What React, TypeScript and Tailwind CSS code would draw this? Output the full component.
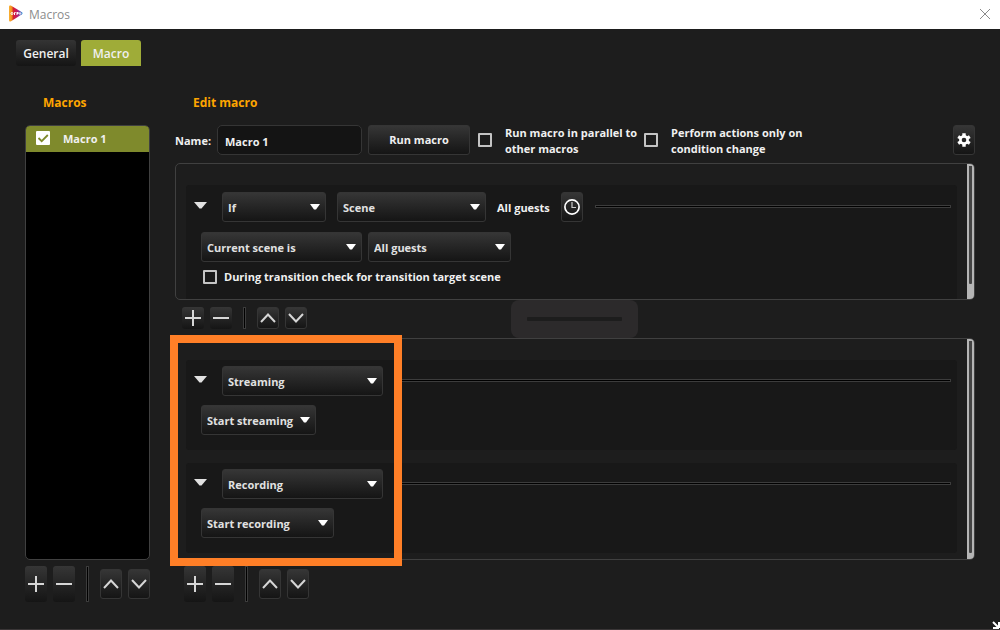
import { useState, type ReactNode } from "react";
import clsx from "clsx";

const buttonFace =
  "bg-linear-to-b from-[#363636] to-[#151515] border border-[#353535] rounded-[3px]";

function Dropdown({
  label,
  options,
  className,
}: {
  label: string;
  options: string[];
  className: string;
}) {
  return (
    <div className={clsx("relative h-[30px] shrink-0", className)}>
      <select
        aria-label={label}
        className={clsx(
          buttonFace,
          "block w-full h-full appearance-none pt-0.5 pl-[5px] pr-4 text-[#e1e1e1] outline-none",
        )}
      >
        {options.map((option) => (
          <option key={option}>{option}</option>
        ))}
      </select>
      <svg
        className="absolute right-1.5 top-3 pointer-events-none"
        width="10"
        height="6"
        viewBox="0 0 10 6"
      >
        <path d="M0 0h10L6 5.500h-2z" fill="#fff" />
      </svg>
    </div>
  );
}

function CheckBox({ id, className }: { id: string; className?: string }) {
  return (
    <input
      id={id}
      type="checkbox"
      className={clsx(
        "appearance-none size-3.5 shrink-0 rounded-[1px] border-2 border-[#c4c4c4] checked:bg-[#c4c4c4]",
        className,
      )}
    />
  );
}

function ToolButton({
  label,
  tall,
  flat,
  children,
}: {
  label: string;
  tall: boolean;
  flat?: boolean;
  children: ReactNode;
}) {
  return (
    <button
      aria-label={label}
      className={clsx(
        "w-[22px] shrink-0 flex items-center justify-center rounded-[3px] bg-linear-to-b from-[#363636] to-[#151515]",
        flat ? "" : "border border-[#353535]",
        !tall && "h-[22px]",
        tall && flat && "h-9",
        tall && !flat && "h-[30px]",
      )}
    >
      <svg
        width="16"
        height="16"
        viewBox="0 0 16 16"
        fill="none"
        stroke="#d6d6d6"
        strokeWidth="2"
        className="shrink-0"
      >
        {children}
      </svg>
    </button>
  );
}

function Toolbar({ tall = false }: { tall?: boolean }) {
  return (
    <div className="flex items-center gap-1.5">
      <ToolButton label="Add" tall={tall} flat>
        <path d="M0 8h16M8 0v16" />
      </ToolButton>
      <ToolButton label="Remove" tall={tall} flat>
        <path d="M0 8h16" />
      </ToolButton>
      <div
        className={clsx(
          "w-[3px] ml-[5px] mr-[5px] bg-black border border-[#3c3c3c]",
          tall ? "h-9" : "h-[22px]",
        )}
      />
      <ToolButton label="Move up" tall={tall}>
        <path d="M1 12l7-7.500 7 7.500" />
      </ToolButton>
      <ToolButton label="Move down" tall={tall}>
        <path d="M1 4l7 7.500 7-7.500" />
      </ToolButton>
    </div>
  );
}

function Rule() {
  return <div className="flex-1 h-[3px] mb-0.5 bg-black border border-[#3c3c3c]" />;
}

function Collapse() {
  return (
    <button aria-label="Collapse" className="mr-[15px] mb-1 shrink-0">
      <svg width="13" height="7" viewBox="0 0 13 7" className="block">
        <path d="M0 0h13L7.500 6.500h-2z" fill="#e1e1e1" />
      </svg>
    </button>
  );
}

function ScrollPanel({
  children,
  className,
  trackClass,
}: {
  children: ReactNode;
  className?: string;
  trackClass: string;
}) {
  return (
    <div className={clsx("flex border border-[#404040] rounded-[5px]", className)}>
      <div className="flex-1 flex flex-col pl-2.5 pr-2.5 pt-[21px]">{children}</div>
      <div
        className={clsx(
          "w-[7px] flex bg-[#b5b5b5] rounded-r-[4px] pl-0.5 pr-0.5 pt-0.5",
          trackClass,
        )}
      >
        <div className="flex-1 bg-[#444] rounded-b-[1px]" />
      </div>
    </div>
  );
}

function Action({
  type,
  command,
  commandClass,
}: {
  type: string;
  command: string;
  commandClass: string;
}) {
  return (
    <div className="bg-[#181818] rounded-[3px] h-[90px] pt-1.5 pl-2 pr-1.5">
      <div className="flex items-center">
        <Collapse />
        <Dropdown label="Action type" options={[type]} className="w-[161px] mr-3" />
        <Rule />
      </div>
      <div className="mt-[9px] ml-[7px]">
        <Dropdown label={`${type} action`} options={[command]} className={commandClass} />
      </div>
    </div>
  );
}

function AppLogo() {
  return (
    <svg width="14" height="17" viewBox="0 0 14 17" className="mb-0.5">
      <defs>
        <linearGradient id="logo" x1="0" x2="1">
          <stop offset="0" stopColor="#f9b233" />
          <stop offset="0.22" stopColor="#f08a1c" />
          <stop offset="0.3" stopColor="#d8232a" />
          <stop offset="0.6" stopColor="#c0186b" />
          <stop offset="0.82" stopColor="#6a4fb0" />
          <stop offset="1" stopColor="#35a8e0" />
        </linearGradient>
      </defs>
      <path d="M0 1.500Q0 0 1.800.6L13 7.200q1.200 1 0 2L2 16.200Q0 17 0 15.200z" fill="url(#logo)" />
      <g fill="none" stroke="#fff" strokeWidth="1">
        <circle cx="3" cy="8.500" r="1" />
        <path d="M5.500 10V7.500h1.200M8 7v3M9.500 7.500h-1.500M8 8.500h1.500" />
        <circle cx="11" cy="8.500" r=".8" />
      </g>
    </svg>
  );
}

export default function App() {
  const [name, setName] = useState("Macro 1");
  const [selected, setSelected] = useState(true);

  return (
    <div className="min-h-screen flex flex-col bg-[#1d1d1d] border-b border-[#3a3637] font-['Open_Sans','Noto_Sans',sans-serif] text-[11px] leading-4 font-bold text-[#f0f0f0]">
      <header className="h-[29px] shrink-0 flex items-center bg-white pl-[9px] pr-[9px] text-[12px] font-normal text-[#8c8c8c]">
        <AppLogo />
        <h1 className="ml-1.5 flex-1">Macros</h1>
        <button aria-label="Close" className="mb-0.5">
          <svg width="12" height="12" viewBox="0 0 12 12" stroke="#8a8a8a">
            <path d="M1 1l10 10M11 1L1 11" />
          </svg>
        </button>
      </header>

      <nav className="flex gap-[5px] pt-[11px] pl-4 text-[12px] font-semibold">
        <button className="w-[60px] h-[26px] pt-0.5 rounded-[3px] bg-linear-to-b from-[#343434] to-[#151515]">
          General
        </button>
        <button className="w-[60px] h-[26px] pt-0.5 rounded-t-[3px] bg-[#9fac38]">Macro</button>
      </nav>

      <main className="flex-1 flex gap-[25px] px-[25px] pt-7 pb-[27px]">
        <section className="w-[125px] shrink-0 flex flex-col">
          <h2 className="pt-px pl-[18px] text-[12px] text-[#fea500]">Macros</h2>
          <div className="mt-3.5 mb-1.5 flex-1 bg-black border border-[#404040] rounded-[5px] overflow-hidden">
            <label className="flex items-center h-[26px] pl-2.5 bg-[#7f8a2c]">
              <span className="relative size-3.5 mb-0.5 mr-[13px]">
                <input
                  type="checkbox"
                  checked={selected}
                  onChange={() => setSelected(!selected)}
                  className="block appearance-none size-3.5 rounded-[1px] bg-white"
                />
                {selected && (
                  <svg
                    className="absolute inset-0 pointer-events-none"
                    viewBox="0 0 14 14"
                    fill="none"
                    stroke="#7f8a2c"
                    strokeWidth="1.800"
                  >
                    <path d="M2.500 7l3.200 3.200L11.800 4" />
                  </svg>
                )}
              </span>
              Macro 1
            </label>
          </div>
          <Toolbar tall />
        </section>

        <section className="flex-1 flex flex-col">
          <h2 className="pt-px pl-[18px] text-[12px] text-[#fea500]">Edit macro</h2>

          <div className="flex items-center mt-3.5 mb-2 h-[30px]">
            <label htmlFor="name" className="w-[42px] pt-0.5">
              Name:
            </label>
            <input
              id="name"
              value={name}
              onChange={(e) => setName(e.target.value)}
              className="w-[145px] h-[30px] pt-0.5 px-[7px] mr-1.5 bg-[#141414] border border-[#353535] rounded-[5px] outline-none"
            />
            <button className={clsx(buttonFace, "w-[102px] h-[30px] mr-2 shrink-0")}>
              Run macro
            </button>
            <CheckBox id="parallel" />
            <label htmlFor="parallel" className="ml-[13px] pt-0.5 w-[139px]">
              Run macro in parallel to
              <br />
              other macros
            </label>
            <CheckBox id="on-change" />
            <label htmlFor="on-change" className="ml-[13px] pt-0.5">
              Perform actions only on
              <br />
              condition change
            </label>
            <button
              aria-label="Macro settings"
              className={clsx(
                buttonFace,
                "w-[22px] h-[30px] ml-auto shrink-0 flex items-center justify-center",
              )}
            >
              <svg width="14" height="14" viewBox="0 0 14 14" className="shrink-0">
                <g stroke="#fff" strokeWidth="3.400">
                  <path d="M7 .3v13.400M1.200 3.600l11.600 6.800M12.800 3.600L1.200 10.400" />
                </g>
                <circle cx="7" cy="7" r="4.900" fill="#fff" />
                <circle cx="7" cy="7" r="2.300" fill="#262626" />
              </svg>
            </button>
          </div>

          <ScrollPanel trackClass="pb-[15px]">
            <div className="bg-[#181818] rounded-t-[3px] pt-[7px] pb-3.5 pl-2 pr-1.5">
              <div className="flex items-center">
                <Collapse />
                <Dropdown label="Logic" options={["If"]} className="w-[104px] mr-[11px]" />
                <Dropdown label="Condition type" options={["Scene"]} className="w-[149px] mr-[11px]" />
                <span className="mr-[11px] pt-0.5">All guests</span>
                <button
                  aria-label="Duration"
                  className={clsx(
                    buttonFace,
                    "w-[22px] h-[30px] mr-3 shrink-0 flex items-center justify-center",
                  )}
                >
                  <svg
                    width="16"
                    height="16"
                    viewBox="0 0 16 16"
                    fill="none"
                    stroke="#fff"
                    className="shrink-0"
                  >
                    <circle cx="8" cy="8" r="7.100" strokeWidth="1.700" />
                    <path d="M8 3v5.500h4" stroke="#ccc" strokeWidth="1.200" />
                  </svg>
                </button>
                <Rule />
              </div>
              <div className="flex gap-1.5 mt-2.5 ml-[7px]">
                <Dropdown label="Scene check" options={["Current scene is"]} className="w-[161px]" />
                <Dropdown label="Scene" options={["All guests"]} className="w-[143px]" />
              </div>
              <div className="flex items-center mt-[7px] ml-[9px]">
                <CheckBox id="transition" />
                <label htmlFor="transition" className="ml-[7px]">
                  During transition check for transition target scene
                </label>
              </div>
            </div>
          </ScrollPanel>

          <div className="relative h-[38px] pl-[7px] pt-[7px]">
            <Toolbar />
            {/* splitter handle */}
            <div className="absolute inset-y-0 left-[336px] w-[127px] bg-[#2c2a2b] rounded-[8px] flex items-center justify-center">
              <div className="w-[95px] h-1 bg-[#1d1d1d] rounded-[1px]" />
            </div>
          </div>

          <div className="relative flex-1 flex flex-col">
            <ScrollPanel className="flex-1" trackClass="pb-1.5">
              <div className="flex flex-col gap-[13px] pb-1.5">
                <Action type="Streaming" command="Start streaming" commandClass="w-[115px]" />
                <Action type="Recording" command="Start recording" commandClass="w-[133px]" />
              </div>
            </ScrollPanel>
            {/* highlighted actions */}
            <div className="absolute -left-[5px] -top-[3px] -bottom-1.5 w-[232px] border-8 border-[#ff7f27] pointer-events-none" />
          </div>

          <div className="mt-1.5 pl-[9px]">
            <Toolbar tall />
          </div>
        </section>
      </main>

      <svg
        className="fixed right-0 bottom-px"
        width="8"
        height="8"
        viewBox="0 0 8 8"
        fill="none"
        stroke="#fff"
        strokeWidth="2"
      >
        <path d="M1 1l5 5M1 7h6M7 1v6" />
      </svg>
    </div>
  );
}
